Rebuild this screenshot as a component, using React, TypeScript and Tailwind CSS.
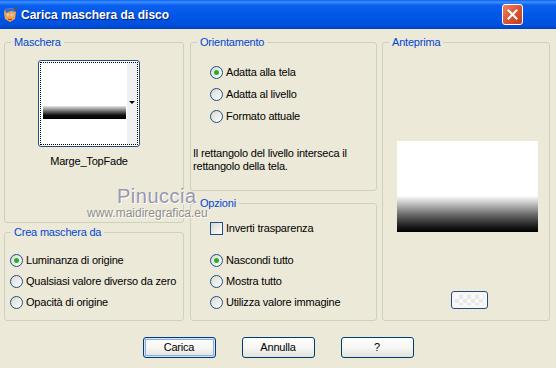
import React from "react";

const Radio = ({ checked }: { checked?: boolean }) => (
  <span className="w-[13px] h-[13px] rounded-full border border-[#1C5180] bg-linear-to-br from-[#D8D8D2] to-white flex items-center justify-center shrink-0">
    {checked && <span className="w-[5px] h-[5px] rounded-full bg-[#27B027]" />}
  </span>
);

const Option = ({ label, checked, h = "h-[21px]" }: { label: string; checked?: boolean; h?: string }) => (
  <div className={`flex items-center gap-[3px] ${h}`}>
    <Radio checked={checked} />
    <span>{label}</span>
  </div>
);

const Group = ({ title, className, children }: { title: string; className: string; children?: React.ReactNode }) => (
  <fieldset className={`min-w-0 border border-[#D0D0BF] rounded-[3px] ${className}`}>
    <legend className="ml-[6px] px-[3px] text-[#0046D5] leading-[13px]">{title}</legend>
    {children}
  </fieldset>
);

const XpButton = ({ label, main }: { label: string; main?: boolean }) => (
  <button
    className={`w-[73px] h-[21px] rounded-[3px] border border-[#003C74] bg-linear-to-b from-white via-[#F6F6F3] to-[#E3E2DA] leading-none ${
      main ? "shadow-[inset_0_0_0_1px_#CEE7FF,inset_0_0_0_2px_#89ADE4]" : ""
    }`}
  >
    {label}
  </button>
);

const TitleBar = () => (
  <div className="h-[29px] flex items-center tracking-normal bg-[linear-gradient(to_bottom,#0A62F0_0%,#3C8FFF_7%,#0B5FEF_18%,#0055E5_60%,#0050DD_85%,#0042C6_100%)]">
    {/* app icon */}
    <svg width="16" height="16" viewBox="0 0 16 16" className="ml-[2px] shrink-0">
      <path d="M3 2 L11 1 L14 5 L13 12 L8 15 L3 12 L2 6 Z" fill="#F3A24A" />
      <path d="M3 2 L11 1 L14 5 L9 4 L4 6 Z" fill="#2F6FD8" />
      <circle cx="6" cy="8" r="1.3" fill="#fff" />
      <circle cx="10" cy="8" r="1.3" fill="#fff" />
      <circle cx="6" cy="8" r="0.6" fill="#123" />
      <circle cx="10" cy="8" r="0.6" fill="#123" />
      <path d="M6 12 Q8 13.5 10 12" stroke="#9A3B10" strokeWidth="1" fill="none" />
      <path d="M12 3 L15 0.5" stroke="#7B4B1E" strokeWidth="1.5" />
    </svg>
    <span className="ml-[3px] text-white font-bold text-[12px] [text-shadow:1px_1px_0_#0A1E6E]">Carica maschera da disco</span>
    <div className="ml-auto mr-[33px] w-[21px] h-[21px] rounded-[3px] border border-white bg-linear-to-br from-[#EE8460] via-[#DB5533] to-[#C23D1B] flex items-center justify-center">
      <svg width="11" height="11" viewBox="0 0 11 11">
        <path d="M1.5 1.5 L9.5 9.5 M9.5 1.5 L1.5 9.5" stroke="#fff" strokeWidth="2" strokeLinecap="square" />
      </svg>
    </div>
  </div>
);

export default function App() {
  return (
    <div className="relative w-[556px] h-[368px] overflow-hidden bg-[#ECE9D8] text-[11px] tracking-[-0.2px] text-black font-['Liberation_Sans',Arial,sans-serif]">
      <TitleBar />

      <div className="flex px-[4px] pt-[7px]">
        {/* left column */}
        <div className="w-[180px] flex flex-col">
          <Group title="Maschera" className="h-[187px]">
            <div className="ml-[33px] mt-[11px] w-[102px]">
              <div className="h-[87px] rounded-[3px] border border-[#1F4F82] bg-white p-[1px]">
                <div className="h-full border border-dotted border-black flex">
                  <div className="flex-1 pl-[2px] pt-[43px]">
                    <div className="h-[13px] w-[83px] bg-[linear-gradient(to_bottom,#E6E6E6,#6A6A6A_40%,#111_70%,#000)]" />
                  </div>
                  <div className="w-[10px] bg-[#F0F0F0] flex justify-center pt-[38px]">
                    <div className="w-0 h-0 border-l-[3px] border-r-[3px] border-t-[3px] border-l-transparent border-r-transparent border-t-black" />
                  </div>
                </div>
              </div>
              <div className="mt-[8px] text-center leading-[13px] whitespace-nowrap">Marge_TopFade</div>
            </div>
          </Group>

          <Group title="Crea maschera da" className="mt-[3px] h-[95px]">
            <div className="pl-[5px] pt-[11px]">
              <Option label="Luminanza di origine" checked />
              <Option label="Qualsiasi valore diverso da zero" />
              <Option label="Opacità di origine" />
            </div>
          </Group>
        </div>

        {/* middle column */}
        <div className="ml-[6px] w-[187px] flex flex-col">
          <Group title="Orientamento" className="h-[155px]">
            <div className="pl-[19px] pt-[12px]">
              <Option label="Adatta alla tela" checked h="h-[22px]" />
              <Option label="Adatta al livello" h="h-[22px]" />
              <Option label="Formato attuale" h="h-[22px]" />
            </div>
            <p className="pl-[2px] mt-[20px] leading-[13px]">
              Il rettangolo del livello interseca il
              <br />
              rettangolo della tela.
            </p>
          </Group>

          <Group title="Opzioni" className="mt-[6px] h-[124px]">
            <div className="pl-[19px] pt-[8px]">
              <div className="flex items-center gap-[3px] h-[21px]">
                <span className="w-[13px] h-[13px] border border-[#1C5180] bg-linear-to-br from-[#D8D8D2] to-white shrink-0" />
                <span>Inverti trasparenza</span>
              </div>
              <div className="mt-[11px]">
                <Option label="Nascondi tutto" checked />
                <Option label="Mostra tutto" />
                <Option label="Utilizza valore immagine" />
              </div>
            </div>
          </Group>
        </div>

        {/* right column */}
        <div className="ml-[5px] w-[168px]">
          <Group title="Anteprima" className="h-[285px]">
            <div className="pl-[14px] pt-[92px]">
              <div className="w-[141px] h-[91px] bg-[linear-gradient(to_bottom,#fff_0%,#fff_60%,#C8C8C8_68%,#707070_80%,#1A1A1A_94%,#000_100%)]" />
              <div className="ml-[54px] mt-[59px] w-[37px] h-[18px] rounded-[3px] border border-[#1F4F82] bg-[#F6F6F4] p-[3px]">
                <div className="h-full bg-[repeating-conic-gradient(#E8E8E8_0_25%,#FAFAFA_0_50%)] bg-[length:8px_8px]" />
              </div>
            </div>
          </Group>
        </div>
      </div>

      <div className="flex justify-center gap-[26px] mt-[16px]">
        <XpButton label="Carica" main />
        <XpButton label="Annulla" />
        <XpButton label="?" />
      </div>

      {/* watermark */}
      <div className="absolute left-[117px] top-[185px] text-[20px] leading-[22px] tracking-[0.5px] text-[#9898AE] [text-shadow:1px_1px_0_#fff]">
        Pinuccia
      </div>
      <div className="absolute left-[87px] top-[206px] text-[12px] leading-[14px] tracking-normal text-[#8E8E8E] [text-shadow:1px_1px_0_#fff]">
        www.maidiregrafica.eu
      </div>
    </div>
  );
}
